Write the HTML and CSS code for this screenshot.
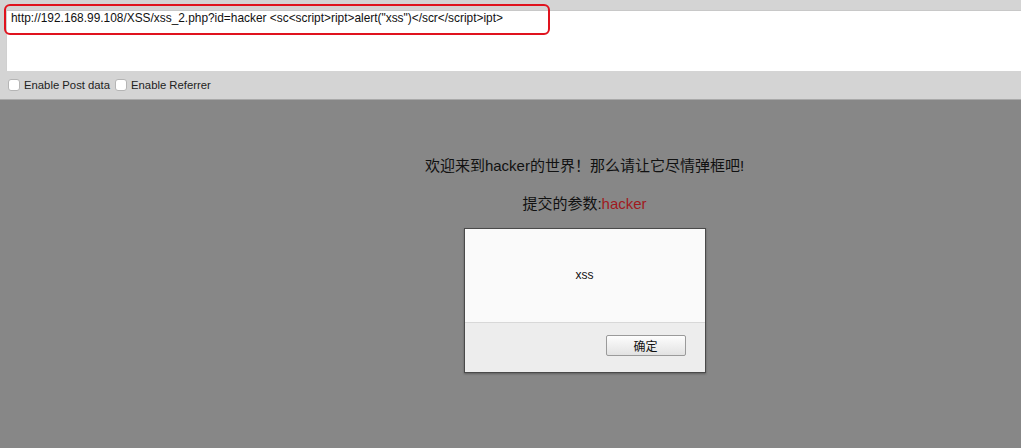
FILE: index.html
```
<!DOCTYPE html>
<html>
<head>
<meta charset="utf-8">
<link rel="stylesheet" href="styles.css">
</head>
<body>
<div class="toolbar">
  <div class="urlarea">
    <div class="urlbox">http://192.168.99.108/XSS/xss_2.php?id=hacker &lt;sc&lt;script&gt;ript&gt;alert("xss")&lt;/scr&lt;/script&gt;ipt&gt;</div>
  </div>
  <div class="options">
    <label class="opt"><span class="cb"></span>Enable Post data</label>
    <label class="opt"><span class="cb"></span>Enable Referrer</label>
  </div>
</div>
<div class="page">
  <div class="content">
    <p class="welcome">欢迎来到hacker的世界！那么请让它尽情弹框吧!</p>
    <p class="param">提交的参数:<span class="val">hacker</span></p>
    <div class="dialog">
      <div class="msg">xss</div>
      <div class="actions"><button class="ok">确定</button></div>
    </div>
  </div>
</div>
</body>
</html>
```
FILE: styles.css
```
* { box-sizing: border-box; }
html, body { margin: 0; padding: 0; }
body {
  width: 1021px;
  height: 448px;
  overflow: hidden;
  background: #878787;
  font-family: "Liberation Sans", Arial, "Noto Sans CJK SC", sans-serif;
}
.toolbar {
  background: #d4d4d4;
  padding-top: 10px;
  border-bottom: 1px solid #a9a9a9;
}
.urlarea {
  position: relative;
  margin-left: 6px;
  height: 61px;
  background: #fff;
  border-top: 1px solid #c8c8c8;
  border-left: 1px solid #d0d0d0;
}
.urlbox {
  position: absolute;
  left: -3px;
  top: -7px;
  width: 546px;
  height: 31px;
  border: 2.5px solid #e0131e;
  border-radius: 6px;
  padding: 5px 0 0 5px;
  font-size: 11.9px;
  color: #111;
  white-space: nowrap;
}
.options {
  height: 28px;
  display: flex;
  align-items: center;
  gap: 5px;
  padding-left: 8px;
  font-size: 11.3px;
  color: #222;
}
.opt { display: flex; align-items: center; gap: 4px; }
.cb {
  width: 12px;
  height: 12px;
  background: #fff;
  border: 1px solid #b5b5b5;
  border-radius: 3px;
}
.page {
  padding-left: 148px;
}
.content {
  display: flex;
  flex-direction: column;
  align-items: center;
  padding-top: 56px;
}
.welcome {
  margin: 0;
  font-size: 15px;
  color: #111;
  line-height: 20px;
}
.param {
  margin: 18px 0 0;
  font-size: 15px;
  color: #111;
  line-height: 20px;
}
.val { color: #a01a1e; }
.dialog {
  margin-top: 14px;
  width: 242px;
  height: 145px;
  border: 1px solid #4a4a4a;
  background: #ededed;
  display: flex;
  flex-direction: column;
  box-shadow: 0 1px 2px rgba(0,0,0,0.3);
}
.msg {
  height: 94px;
  background: #fafafa;
  border-bottom: 1px solid #d8d8d8;
  display: flex;
  justify-content: center;
  align-items: center;
  font-size: 12px;
  color: #111;
  padding-bottom: 2px;
}
.actions {
  flex: 1;
  display: flex;
  justify-content: flex-end;
  align-items: flex-start;
  padding: 12px 19px 0 0;
}
.ok {
  width: 80px;
  height: 21px;
  border: 1px solid #9a9a9a;
  border-radius: 2px;
  background: linear-gradient(#fdfdfd, #e2e2e2);
  font-family: "Noto Sans CJK SC", sans-serif;
  font-size: 12px;
  color: #111;
  padding: 0;
  line-height: 19px;
}
```
